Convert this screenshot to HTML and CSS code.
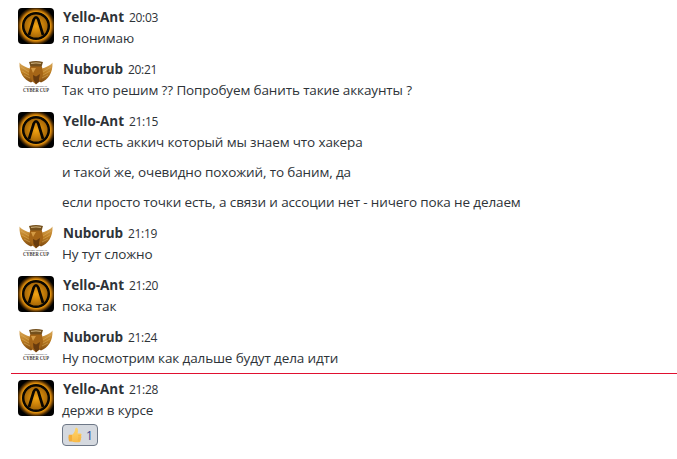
FILE: index.html
```html
<!DOCTYPE html>
<html lang="ru">
<head>
  <meta charset="UTF-8" />
  <meta name="viewport" content="width=device-width, initial-scale=1.0" />
  <title>Чат</title>
  <link rel="stylesheet" href="styles.css">
</head>
<body>

<svg class="sprite" width="36" height="36" aria-hidden="true">
  <defs>
    <radialGradient id="glow">
      <stop offset="0" stop-color="#f0a414" />
      <stop offset="0.3" stop-color="#d0860a" />
      <stop offset="0.58" stop-color="#a86806" />
      <stop offset="0.72" stop-color="#f0a010" />
      <stop offset="0.8" stop-color="#b87008" />
      <stop offset="0.9" stop-color="#4a2b02" />
      <stop offset="1" stop-color="#000" />
    </radialGradient>
    <linearGradient id="gold" x1="0" y1="0" x2="0" y2="1">
      <stop offset="0" stop-color="#d9a95c" />
      <stop offset="0.5" stop-color="#bd7e22" />
      <stop offset="1" stop-color="#7e4a10" />
    </linearGradient>
    <linearGradient id="thumb" x1="0" y1="0" x2="0" y2="1">
      <stop offset="0" stop-color="#ffd56b" />
      <stop offset="1" stop-color="#f9ba48" />
    </linearGradient>
  </defs>
  <symbol id="yello" viewBox="0 0 36 36">
    <rect width="36" height="36" fill="#000" />
    <circle cx="18" cy="18" r="19.5" fill="url(#glow)" />
    <circle cx="18" cy="18" r="12.8" fill="none" stroke="#0b0701" stroke-width="2.5" />
    <path d="M11 27 15.700 11.500Q18 7 20.300 11.500L25 27" fill="none" stroke="#0b0701" stroke-width="2.700" />
  </symbol>
  <symbol id="nubo" viewBox="0 0 36 36">
    <path d="M1.500 2.500C4 6 8 7 13 9l4 11-4 2.500C6 20 1 13 1.500 2.500z" fill="url(#gold)" />
    <path d="M34.500 2.500C32 6 28 7 23 9l-4 11 4 2.500C30 20 35 13 34.500 2.500z" fill="url(#gold)" />
    <path d="M3 7l8 5M4 11l7 4M6 15l6 3M33 7l-8 5M32 11l-7 4M30 15l-6 3" stroke="#dfb364" stroke-width=".5" />
    <path d="M11 2q7-2 14 0l-1.500 5h-11z" fill="#74501d" />
    <path d="M13 3.400q5-1 10 0" stroke="#ecd3a0" stroke-width=".8" fill="none" />
    <path d="M12 6.500h12l1 7.500-3 7-4 3.500-4-3.500-3-7z" fill="#a56517" />
    <path d="M15 15l3 1.500 4-2.500-1 5 .5 2.500-3.500 2.500-2.500-4z" fill="#683b0e" />
    <path d="M13 8h5l-3 5z" fill="#d49a44" />
    <text class="cup-top" x="18" y="27.4" textLength="23" lengthAdjust="spacingAndGlyphs">INTERNATIONAL</text>
    <text class="cup-name" x="18" y="32" textLength="26" lengthAdjust="spacingAndGlyphs">CYBER CUP</text>
  </symbol>
</svg>

<main class="chat">
  <article class="message">
    <svg class="avatar"><use href="#yello" /></svg>
    <div class="content">
      <div class="head"><b class="author">Yello-Ant</b><time>20:03</time></div>
      <p>я понимаю</p>
    </div>
  </article>

  <article class="message">
    <svg class="avatar"><use href="#nubo" /></svg>
    <div class="content">
      <div class="head"><b class="author">Nuborub</b><time>20:21</time></div>
      <p>Так что решим ?? Попробуем банить такие аккаунты ?</p>
    </div>
  </article>

  <article class="message">
    <svg class="avatar"><use href="#yello" /></svg>
    <div class="content">
      <div class="head"><b class="author">Yello-Ant</b><time>21:15</time></div>
      <p>если есть аккич который мы знаем что хакера</p>
      <p>и такой же, очевидно похожий, то баним, да</p>
      <p>если просто точки есть, а связи и ассоции нет - ничего пока не делаем</p>
    </div>
  </article>

  <article class="message">
    <svg class="avatar"><use href="#nubo" /></svg>
    <div class="content">
      <div class="head"><b class="author">Nuborub</b><time>21:19</time></div>
      <p>Ну тут сложно</p>
    </div>
  </article>

  <article class="message">
    <svg class="avatar"><use href="#yello" /></svg>
    <div class="content">
      <div class="head"><b class="author">Yello-Ant</b><time>21:20</time></div>
      <p>пока так</p>
    </div>
  </article>

  <article class="message">
    <svg class="avatar"><use href="#nubo" /></svg>
    <div class="content">
      <div class="head"><b class="author">Nuborub</b><time>21:24</time></div>
      <p>Ну посмотрим как дальше будут дела идти</p>
    </div>
  </article>

  <hr class="unread">

  <article class="message">
    <svg class="avatar"><use href="#yello" /></svg>
    <div class="content">
      <div class="head"><b class="author">Yello-Ant</b><time>21:28</time></div>
      <p>держи в курсе</p>
      <button class="reaction" type="button">
        <svg class="thumb" viewBox="0 0 14 16">
          <path d="M.8 7.800h3.400v6.700H1.300Q-.1 11.500.8 7.800z" fill="#f2ad3c" />
          <path d="M4 8C6.300 6.200 7 4.300 7.200 1.800 7.500.2 9.800.5 10 2.800c.1 1.300-.2 2.600-.5 3.700h2.800c1.500 0 1.700 1.900.6 2.400.9.500.8 1.900-.1 2.300.6.600.4 1.700-.4 2 .4 1-.2 2-1.300 2H7c-1.200 0-2-.300-3-.7z" fill="url(#thumb)" />
          <path d="M10.200 8.800h2.600M10 11h2.700M9.800 13h2.500" stroke="#e79c34" stroke-width=".5" />
        </svg>
        <span>1</span>
      </button>
    </div>
  </article>
</main>

</body>
</html>
```

FILE: styles.css
```css
body {
  margin: 0;
  background-color: #fff;
  color: #2e3338;
  font-family: "Open Sans", "Noto Sans", sans-serif;
  font-size: 13.5px;
  line-height: 20px;
}
.sprite {
  position: absolute;
}
.chat {
  padding: 4px 0 0 11px;
}
.message {
  display: flex;
  gap: 8px;
  padding: 4px 0 4px 7px;
}
.avatar {
  flex: none;
  width: 36px;
  height: 36px;
  border-radius: 4px;
}
.cup-top,
.cup-name {
  font-family: "Liberation Serif", serif;
  text-anchor: middle;
  fill: #45403a;
}
.cup-top {
  font-size: 2.8px;
  font-weight: bold;
}
.cup-name {
  font-size: 5.4px;
  font-weight: bold;
}
.content {
  min-width: 0;
}
.head {
  display: flex;
  gap: 5px;
  height: 20px;
  line-height: 19px;
  padding-left: 1px;
}
.author {
  letter-spacing: -0.05px;
}
time {
  font-size: 12px;
  letter-spacing: -0.3px;
}
p {
  margin: 0 0 10px;
  height: 20px;
  letter-spacing: -0.13px;
  white-space: nowrap;
}
p:last-child {
  margin-bottom: 4px;
}
.unread {
  height: 1px;
  margin: -3px 0 2px;
  border: none;
  background-color: #e01030;
}
.reaction {
  display: flex;
  align-items: center;
  gap: 4px;
  box-sizing: border-box;
  width: 36px;
  height: 22px;
  margin-top: -6px;
  padding: 0 4px 0 5px;
  border: 1px solid #6e7887;
  border-radius: 4px;
  background-color: #d5d9df;
  color: #34438f;
  font-family: inherit;
  font-size: 12px;
}
.thumb {
  flex: none;
  width: 14px;
  height: 16px;
}
```
